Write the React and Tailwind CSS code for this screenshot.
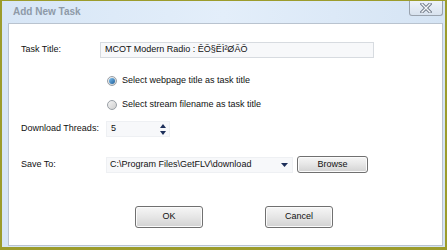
import React from "react";

function Radio({ checked }) {
  return (
    <div className="w-[10px] h-[10px] rounded-full border border-[#9aa0a6] bg-gradient-to-br from-[#f4f4f4] to-[#cfcfcf] flex items-center justify-center">
      {checked && (
        <div className="w-[6px] h-[6px] rounded-full bg-gradient-to-br from-[#7fc3f2] to-[#1f5f99]" />
      )}
    </div>
  );
}

function Btn({ children, w }) {
  return (
    <div
      className={`${w} h-[22px] rounded-[3px] border border-[#707070] bg-gradient-to-b from-[#f6f6f6] via-[#e6e6e6] to-[#d2d2d2] flex items-center justify-center text-[#111] shadow-[inset_0_0_0_1px_#fbfbfb]`}
    >
      {children}
    </div>
  );
}

export default function App() {
  return (
    <div
      className="w-[447px] h-[250px] bg-[#9c9c2c] pt-[1px] pl-[2px] pr-[2px] pb-[3px] flex overflow-hidden"
      style={{ fontFamily: '"Liberation Sans", Arial, sans-serif' }}
    >
      <div className="flex-1 flex flex-col bg-gradient-to-r from-[#d7e6f6] via-[#e3eefa] to-[#d5e4f4] pl-[6px] pr-[2px] pb-[1px]">
        <div className="h-[21px] flex items-start justify-between">
          <div className="pl-[5px] pt-[6px] text-[10px] font-bold text-[#8e9aa8] leading-none">
            Add New Task
          </div>
          <div className="w-[34px] h-[15px] border border-t-0 border-[#9aa3ae] rounded-b-[3px] bg-gradient-to-b from-[#eef3f9] to-[#d8e2ee] flex items-center justify-center">
            <svg width="12" height="10" viewBox="0 0 12 10">
              <path d="M2 1 L10 9 M10 1 L2 9" stroke="#6d7785" strokeWidth="3.2" strokeLinecap="square" />
              <path d="M2 1 L10 9 M10 1 L2 9" stroke="#f4f6f9" strokeWidth="1.4" strokeLinecap="square" />
            </svg>
          </div>
        </div>
        <div className="flex-1 bg-white border border-[#b9c3cf] mt-[1px] text-[9px] text-[#111] relative">
          <div className="flex flex-col pt-[18px]">
            <div className="flex items-center h-[16px]">
              <div className="w-[91px] pl-[12px]">Task Title:</div>
              <div className="w-[274px] h-[16px] border border-[#d7dbe0] bg-[#f7f8fa] flex items-center pl-[4px]">
                MCOT Modern Radio : ÊÕ§ËÌ²ØÃÕ
              </div>
            </div>
            <div className="flex items-center h-[12px] mt-[17px] pl-[98px] gap-[5px]">
              <Radio checked />
              <span>Select webpage title as task title</span>
            </div>
            <div className="flex items-center h-[12px] mt-[12px] pl-[98px] gap-[5px]">
              <Radio />
              <span>Select stream filename as task title</span>
            </div>
            <div className="flex items-center h-[16px] mt-[10px]">
              <div className="w-[97px] pl-[12px]">Download Threads:</div>
              <div className="w-[64px] h-[16px] bg-[#f7f8fa] border border-[#eef0f3] flex items-center justify-between pl-[4px] pr-[3px]">
                <span>5</span>
                <svg width="6" height="11" viewBox="0 0 6 11">
                  <path d="M0 4 L3 0 L6 4 Z" fill="#1d2f5a" />
                  <path d="M0 7 L3 11 L6 7 Z" fill="#1d2f5a" />
                </svg>
              </div>
            </div>
            <div className="flex items-center h-[17px] mt-[19px]">
              <div className="w-[97px] pl-[12px]">Save To:</div>
              <div className="w-[187px] h-[16px] bg-[#f7f8fa] border border-[#eef0f3] flex items-center justify-between pl-[3px] pr-[4px]">
                <span>C:\Program Files\GetFLV\download</span>
                <svg width="7" height="4" viewBox="0 0 7 4">
                  <path d="M0 0 L7 0 L3.5 4 Z" fill="#1d2f5a" />
                </svg>
              </div>
              <div className="ml-[4px]">
                <Btn w="w-[71px] !h-[17px]">Browse</Btn>
              </div>
            </div>
            <div className="flex items-center mt-[33px] pl-[126px] gap-[62px]">
              <Btn w="w-[68px]">OK</Btn>
              <Btn w="w-[68px]">Cancel</Btn>
            </div>
          </div>
        </div>
      </div>
    </div>
  );
}
